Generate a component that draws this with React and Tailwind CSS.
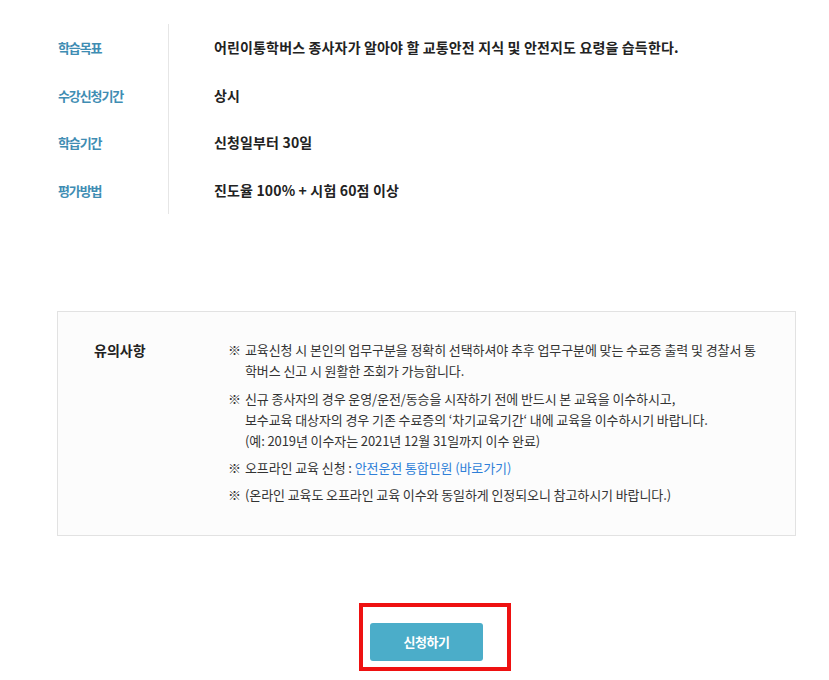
import React from "react";

const font = { fontFamily: '"Noto Sans CJK KR", "Noto Sans", sans-serif' };

const rows = [
  ["학습목표", "어린이통학버스 종사자가 알아야 할 교통안전 지식 및 안전지도 요령을 습득한다."],
  ["수강신청기간", "상시"],
  ["학습기간", "신청일부터 30일"],
  ["평가방법", "진도율 100% + 시험 60점 이상"],
];

function Note({ children, className = "" }) {
  return (
    <div className={"flex " + className}>
      <span className="w-[17px] shrink-0">※</span>
      <div>{children}</div>
    </div>
  );
}

export default function App() {
  return (
    <div className="w-[829px] h-[680px] bg-white overflow-hidden" style={font}>
      <div className="pt-[24px] pl-[57px] flex">
        <div className="flex flex-col">
          {rows.map(([l]) => (
            <div key={l} className="h-[47.5px] flex items-center pl-[1px] w-[111px] text-[13px] font-bold text-[#3f8db3] tracking-[-1.1px]">
              {l}
            </div>
          ))}
        </div>
        <div className="flex flex-col border-l border-[#e6e6e6] pl-[45px]">
          {rows.map(([l, v]) => (
            <div key={l} className="h-[47.5px] flex items-center text-[14px] font-bold text-[#222] tracking-[0.15px] whitespace-nowrap">
              {v}
            </div>
          ))}
        </div>
      </div>

      <div className="mt-[97px] ml-[57px] w-[739px] h-[225px] border border-[#e2e2e2] bg-[#fcfcfc] flex pt-[27px]">
        <div className="w-[170px] pl-[36px] text-[14px] font-bold text-[#222] leading-[23px]">유의사항</div>
        <div className="text-[13px] leading-[21px] text-[#333] tracking-[-0.1px] whitespace-nowrap">
          <Note className="mb-[7px]">
            교육신청 시 본인의 업무구분을 정확히 선택하셔야 추후 업무구분에 맞는 수료증 출력 및 경찰서 통<br />
            학버스 신고 시 원활한 조회가 가능합니다.
          </Note>
          <Note className="mb-[6px]">
            신규 종사자의 경우 운영/운전/동승을 시작하기 전에 반드시 본 교육을 이수하시고,<br />
            보수교육 대상자의 경우 기존 수료증의 ‘차기교육기간‘ 내에 교육을 이수하시기 바랍니다.<br />
            (예: 2019년 이수자는 2021년 12월 31일까지 이수 완료)
          </Note>
          <Note className="mb-[6px]">
            오프라인 교육 신청 : <span className="text-[#2f7fd8]">안전운전 통합민원 (바로가기)</span>
          </Note>
          <Note>(온라인 교육도 오프라인 교육 이수와 동일하게 인정되오니 참고하시기 바랍니다.)</Note>
        </div>
      </div>

      <div className="mt-[67px] pl-[359px]">
        <div className="w-[152px] h-[68px] border-[4px] border-[#ee1111] pl-[7px] pt-[16px]">
          <button className="w-[113px] h-[38px] rounded-[3px] bg-[#4badc9] text-white text-[13px] font-bold tracking-[-0.5px]">
            신청하기
          </button>
        </div>
      </div>
    </div>
  );
}
